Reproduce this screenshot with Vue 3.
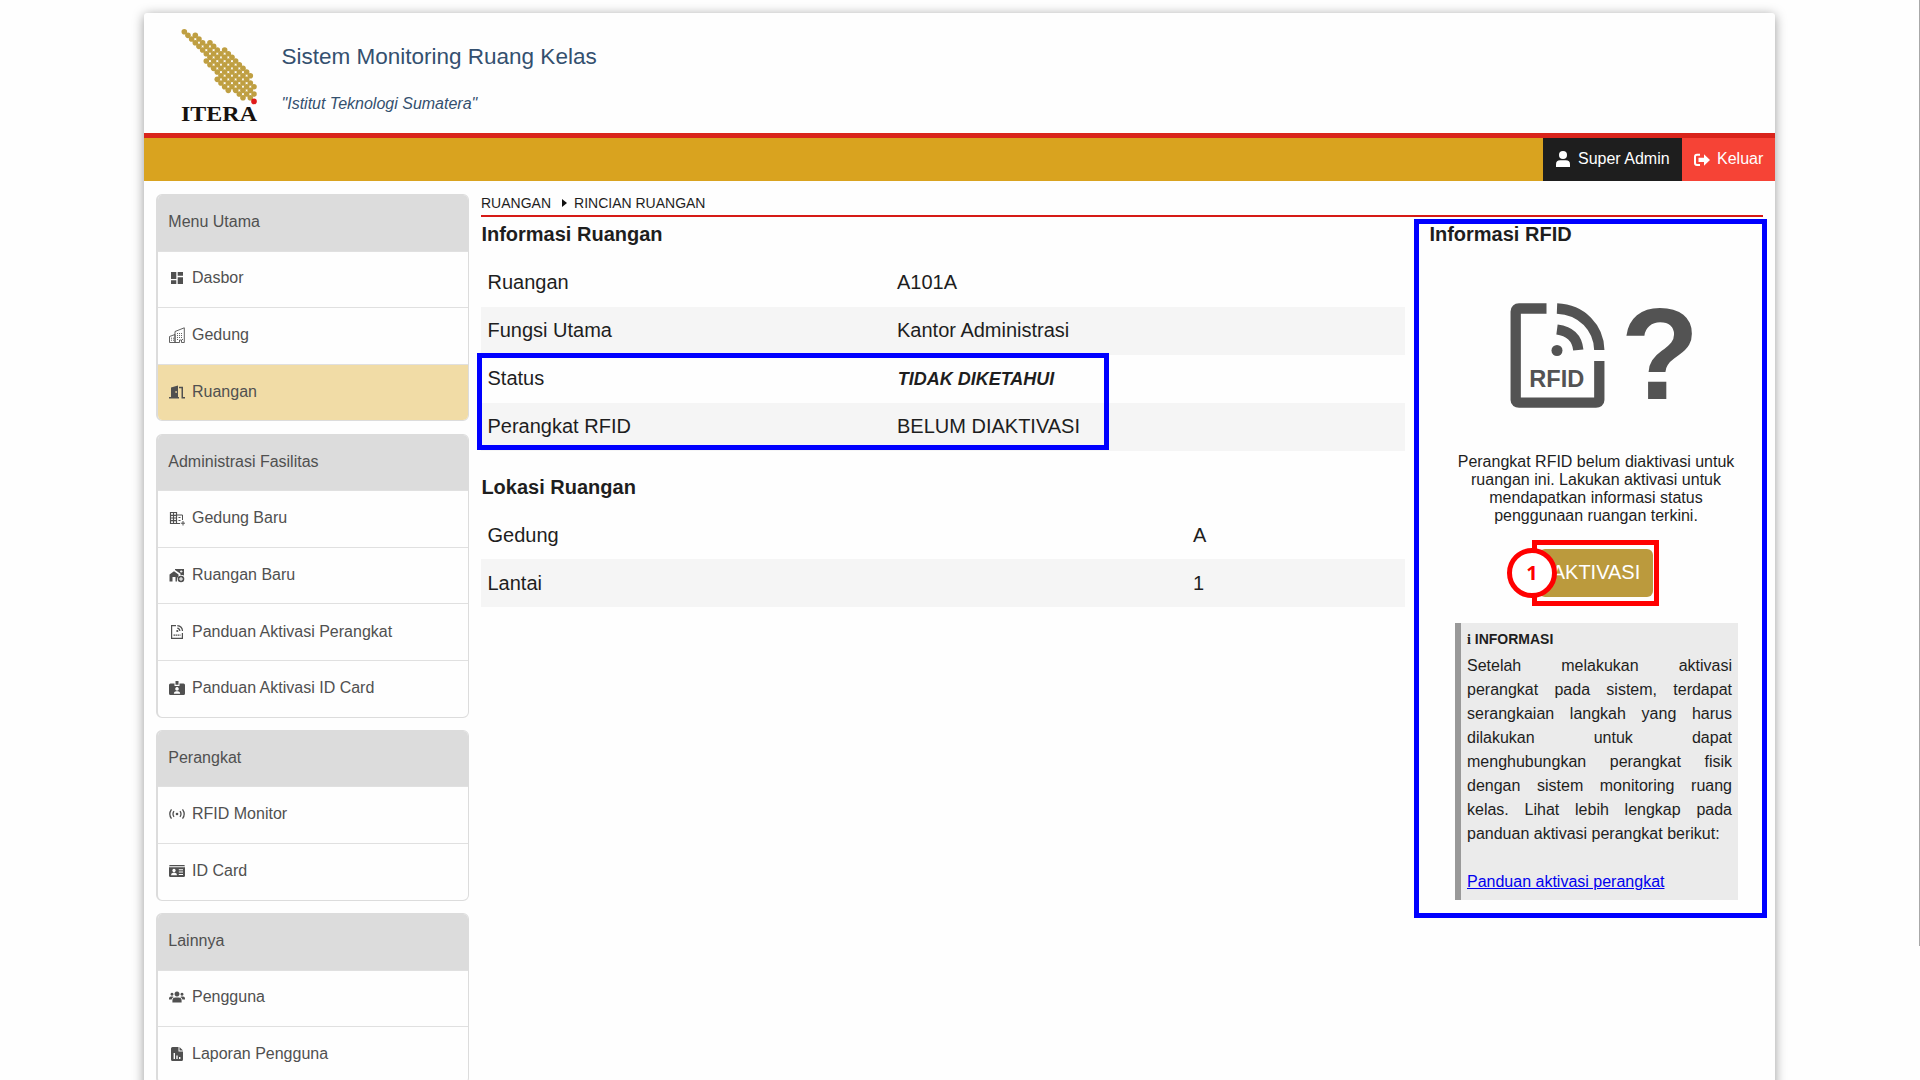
<script setup>
const menus = [
  { title: 'Menu Utama', items: [
    { label: 'Dasbor', icon: 'dash' },
    { label: 'Gedung', icon: 'city' },
    { label: 'Ruangan', icon: 'door', active: true }
  ] },
  { title: 'Administrasi Fasilitas', items: [
    { label: 'Gedung Baru', icon: 'buildingAdd' },
    { label: 'Ruangan Baru', icon: 'roomAdd' },
    { label: 'Panduan Aktivasi Perangkat', icon: 'rfid' },
    { label: 'Panduan Aktivasi ID Card', icon: 'badge' }
  ] },
  { title: 'Perangkat', items: [
    { label: 'RFID Monitor', icon: 'signal' },
    { label: 'ID Card', icon: 'card' }
  ] },
  { title: 'Lainnya', items: [
    { label: 'Pengguna', icon: 'users' },
    { label: 'Laporan Pengguna', icon: 'report' }
  ] }
]

const icons = {
  dash: 'M2 2h5.3v7H2zM8.7 2H14v3.8H8.700zM8.700 7.200H14V14H8.700zM2 10.300h5.300V14H2z',
  door: 'M2 3.500 9 1.500V13h1v1.500H0V13h2zM6.500 7v2h1.200V7zM10 2.800h4V13h2v1.500h-3.500V4.200H10z',
  badge: 'M1.500 3.500H5.500V6h5V3.500h4Q16 3.500 16 5v8.500Q16 15 14.500 15h-13Q0 15 0 13.500V5Q0 3.500 1.500 3.500zM8 7a1.800 1.800 0 1 0 .01 0zM4.800 13.800h6.400q0-2.600-2.200-2.600H7q-2.200 0-2.200 2.600zM6.500 1h3v3.800h-3z',
  card: 'M1.500 2h13Q16 2 16 3.200H0Q0 2 1.500 2zM0 4.200h16v8.600q0 1.200-1.500 1.200h-13Q0 14 0 12.800zM5 5.800a1.700 1.700 0 1 0 .01 0zM2 12.300h6q0-2.500-2-2.500H4q-2 0-2 2.500zM9.800 6.200v1H14v-1zM9.800 8.600v1H14v-1zM9.800 11v1H14v-1z',
  users: 'M8 2.500a2.500 2.500 0 1 0 .01 0zM3 3.800a1.500 1.500 0 1 0 .01 0zM13 3.800a1.500 1.500 0 1 0 .01 0zM3.400 13.500v-2q0-3 3-3h3.200q3 0 3 3v2zM0 10.500v-1q0-2 2-2h1.600q.8 0 1.200.4-2 .8-2.200 2.600zM16 10.500v-1q0-2-2-2h-1.600q-.8 0-1.200.4 2 .8 2.200 2.600z',
  report: 'M3.500 1H9.500v4.500H14V13.500Q14 15 12.500 15h-9Q2 15 2 13.500v-11Q2 1 3.500 1zM10.500 1 14 4.500h-3.500zM4.600 7v6H6V7zM7.300 9.500V13h1.400V9.500zM10 11v2h1.400v-2z'
}

const spans = [
  [0, 0], [1, 3], [2, 4], [3, 7], [4, 8], [5, 11], [6, 12], [7, 13], [6, 14], [7, 15],
  [8, 16], [9, 17], [10, 18], [9, 17], [10, 18], [11, 19], [12, 18], [15, 19], [16, 18]
]
const dots = spans.flatMap(([from, to], row) => {
  const out = []
  for (let c = from; c <= to; c += 2) out.push({ x: 3.3 + c * 3.667, y: 3.7 + row * 3.667 })
  return out
})

const room = [
  ['Ruangan', 'A101A'],
  ['Fungsi Utama', 'Kantor Administrasi'],
  ['Status', 'TIDAK DIKETAHUI'],
  ['Perangkat RFID', 'BELUM DIAKTIVASI']
]
const place = [['Gedung', 'A'], ['Lantai', '1']]
</script>

<template>
  <div class="screen">
    <div class="page">
      <header class="head">
        <svg class="logo" width="80" height="96" viewBox="0 0 80 96">
          <circle v-for="(d, i) in dots" :key="i" :cx="d.x" :cy="d.y" r="2.8" fill="#bf9f42" />
          <circle cx="73" cy="73.400" r="2.800" fill="#e01b1b" />
          <text x="0" y="92.800" textLength="76" lengthAdjust="spacingAndGlyphs" class="logo-text">ITERA</text>
        </svg>
        <div class="titles">
          <div class="title">Sistem Monitoring Ruang Kelas</div>
          <div class="subtitle">"Istitut Teknologi Sumatera"</div>
        </div>
      </header>

      <nav class="bar">
        <a class="user">
          <svg width="14" height="16" viewBox="0 0 14 16" fill="#fff"><circle cx="7" cy="4" r="4" /><path d="M0 16v-2.500Q0 9.300 4.200 9.300h5.600q4.200 0 4.200 4.200V16z" /></svg>
          <span>Super Admin</span>
        </a>
        <a class="out">
          <svg width="16" height="14" viewBox="0 0 16 14"><path d="M6 1.700H3Q1 1.700 1 3.700v6.300q0 2 2 2h3" fill="none" stroke="#fff" stroke-width="2" /><path d="M4.500 4.800H10V1.200L16 7l-6 5.800V9H4.500z" fill="#fff" /></svg>
          <span>Keluar</span>
        </a>
      </nav>

      <div class="body">
        <aside class="side">
          <section v-for="m in menus" :key="m.title" class="menu">
            <div class="menu-title">{{ m.title }}</div>
            <a v-for="it in m.items" :key="it.label" class="item" :class="{ active: it.active }">
              <svg width="16" height="16" viewBox="0 0 16 16">
                <g v-if="it.icon === 'city'" fill="none" stroke="#505050" stroke-width=".9">
                  <path d="M.5 15.500V9.500L6 7.500v8zM6 15.500V4.500L15.300.8v14.700h-2.800v-2.500h-2v2.500z" />
                  <path d="M2 11.200h3M2 13.200h3M8 6.500h6M8 8.500h6M8 10.500h6M8 12.500h2M13 12.500h1" stroke-dasharray="1 1" />
                </g>
                <g v-else-if="it.icon === 'buildingAdd'" fill="none" stroke="#505050">
                  <path d="M1.500 2.500h6v11h-6zM1.500 5.300h6M1.500 8h6M1.500 10.700h6M4.500 2.500v11" stroke-width="1.200" />
                  <path d="M7.500 5h6v5M7.500 13.500H11M9.500 7.500h2M9.500 10.500h2M14 11v4.500M11.800 13.200h4.400" />
                </g>
                <g v-else-if="it.icon === 'roomAdd'">
                  <path d="M.5 14.500V7.500L5 4.300 9.500 7.500v2q-2 1-1.500 5H6.500V10h-3v4.500zM6 2h9v6.500q-1.200-.8-3.500-.3V6.800L6 3z" fill="#505050" />
                  <path d="M11 4.500h2.500M12.200 3.200v2.500" stroke="#fff" stroke-width=".8" />
                  <circle cx="12" cy="12" r="3.300" fill="#505050" /><path d="M12 10v4M10 12h4" stroke="#fff" />
                </g>
                <g v-else-if="it.icon === 'rfid'" fill="none" stroke="#505050" stroke-width="1.200">
                  <path d="M7 1.600H2.600v12.800h10.800V9M8.300 1.600q5 .6 5.200 5.400M8.300 4.200q2.300.3 2.600 2.800" />
                  <path d="M4.500 11.200h7" stroke-dasharray="1.500 .5" /><circle cx="8.300" cy="7" r=".5" />
                </g>
                <g v-else-if="it.icon === 'signal'" fill="none" stroke="#505050" stroke-width="1.300">
                  <path d="M2.500 3.300q-3.400 4.700 0 9.400M13.500 3.300q3.400 4.700 0 9.400M5 5.200q-2 2.800 0 5.600M11 5.200q2 2.800 0 5.600" />
                  <circle cx="8" cy="8" r="1.300" fill="#505050" stroke="none" />
                </g>
                <path v-else :d="icons[it.icon]" fill="#505050" fill-rule="evenodd" />
              </svg>
              <span>{{ it.label }}</span>
            </a>
          </section>
        </aside>

        <main class="main">
          <div class="crumb">
            <span>RUANGAN</span>
            <svg width="5" height="8" viewBox="0 0 5 8"><path d="M0 0 5 4 0 8z" fill="#111" /></svg>
            <span>RINCIAN RUANGAN</span>
          </div>
          <div class="cols">
            <div class="info">
              <h2>Informasi Ruangan</h2>
              <div class="table">
                <div v-for="r in room" :key="r[0]" class="row">
                  <span class="key">{{ r[0] }}</span>
                  <span :class="{ unknown: r[0] === 'Status' }">{{ r[1] }}</span>
                </div>
                <div class="frame status-frame"></div>
              </div>
              <h2 class="second">Lokasi Ruangan</h2>
              <div class="table place">
                <div v-for="r in place" :key="r[0]" class="row low">
                  <span class="key wide">{{ r[0] }}</span><span>{{ r[1] }}</span>
                </div>
              </div>
            </div>

            <div class="rfid">
              <h2>Informasi RFID</h2>
              <svg class="rfid-icon" width="184" height="108" viewBox="0 0 184 108">
                <g fill="none" stroke="#535353" stroke-width="10.300">
                  <path d="M36.500 7.500H9Q5.700 7.500 5.700 10.500V99Q5.700 101.600 9 101.600H86Q89.300 101.600 89.300 99V60" />
                  <path d="M47 7.500C72 8.500 88.800 27 89.300 49M47 28.500Q66.500 31 68.300 49" />
                </g>
                <circle cx="47" cy="49.500" r="5.500" fill="#535353" />
                <text x="19.300" y="86" class="rfid-label" textLength="55" lengthAdjust="spacingAndGlyphs">RFID</text>
                <text x="110.500" y="98" class="question">?</text>
              </svg>
              <p class="note">Perangkat RFID belum diaktivasi untuk<br>ruangan ini. Lakukan aktivasi untuk<br>mendapatkan informasi status<br>penggunaan ruangan terkini.</p>
              <div class="action">
                <button type="button">AKTIVASI</button>
                <div class="red-frame"></div>
                <div class="step">1</div>
              </div>
              <div class="tip">
                <div class="tip-title"><span class="i">i</span> INFORMASI</div>
                <p>Setelah melakukan aktivasi perangkat pada sistem, terdapat serangkaian langkah yang harus dilakukan untuk dapat menghubungkan perangkat fisik dengan sistem monitoring ruang kelas. Lihat lebih lengkap pada panduan aktivasi perangkat berikut:</p>
                <a class="link">Panduan aktivasi perangkat</a>
              </div>
              <div class="frame rfid-frame"></div>
            </div>
          </div>
        </main>
      </div>
    </div>
    <div class="scroll"></div>
  </div>
</template>

<style>
html, body { margin: 0; overflow: hidden; background: #fff; }
</style>

<style scoped>
* { box-sizing: border-box; }
.screen { position: relative; width: 1920px; height: 1080px; overflow: hidden; background: #fefefe; font-family: "Liberation Sans", Arial, sans-serif; font-size: 16px; color: #1e1e1e; }
.page { width: 1631px; height: 1200px; margin: 13px 0 0 144px; background: #fefefe; border-radius: 3px; box-shadow: 0 2px 12px rgba(0, 0, 0, .4); }
.head { height: 125px; display: flex; border-bottom: 5px solid #d9241b; }
.logo { margin: 15px 0 0 37px; }
.logo-text { font: bold 20.500px "Liberation Serif", serif; fill: #17120f; }
.titles { margin-left: 20.500px; color: #34506f; }
.title { margin-top: 31px; font-size: 22.500px; line-height: 26px; }
.subtitle { margin-top: 25px; font-size: 16px; line-height: 18px; font-style: italic; }
.bar { height: 43px; background: #d9a31f; display: flex; justify-content: flex-end; color: #fff; }
.bar a { display: flex; align-items: center; padding-bottom: 2px; }
.user { width: 139px; background: #1e1e1e; padding-left: 13px; gap: 8px; }
.out { width: 93px; background: #f64336; padding-left: 12px; gap: 7px; }
.user svg { position: relative; top: .5px; }
.out svg { position: relative; top: 1px; }
.body { display: flex; padding: 13px 12px 0 12px; }
.side { width: 313px; display: flex; flex-direction: column; gap: 12.400px; margin-right: 12px; flex: none; color: #505050; }
.menu { border: 1px solid #dcdcdc; border-left-width: 2px; border-radius: 6px; overflow: hidden; }
.menu-title { height: 55.500px; line-height: 53px; padding-left: 10.300px; background: #dcdcdc; }
.item { height: 56.600px; display: flex; align-items: center; gap: 6.700px; padding: 0 0 1px 11.300px; border-top: 1px solid #e0e0e0; }
.item:nth-child(2) { padding-bottom: 2px; }
.item svg { flex: none; }
.item.active { background: #f1dca6; }
.main { flex: 1; min-width: 0; }
.crumb { height: 23px; display: flex; align-items: center; gap: 8px; padding-bottom: 3px; font-size: 14px; border-bottom: 2px solid #d61a16; }
.crumb svg { margin-left: 3px; margin-right: -1px; }
.cols { display: flex; justify-content: space-between; }
.info { width: 924px; }
h2 { margin: 0; font-size: 20px; line-height: 24px; padding: 5px 0 0 .4px; }
.table { position: relative; margin-top: 13px; font-size: 20px; }
.second { padding-top: 24px; }
.place { margin-top: 12px; }
.row { height: 48px; display: flex; align-items: center; padding: 0 0 1px 6.500px; }
.row.low { padding-top: 1px; padding-bottom: 0; }
.row:nth-child(even) { background: #f5f5f5; }
.key { width: 409.500px; }
.key.wide { width: 705.500px; }
.unknown { font-weight: bold; font-style: italic; font-size: 18px; padding: 1px 0 0 .7px; }
.frame { position: absolute; border: 5px solid #00f; }
.status-frame { left: -4px; top: 94px; width: 632px; height: 97px; }
.rfid { position: relative; width: 334px; display: flex; flex-direction: column; align-items: flex-start; }
.rfid-frame { left: -15px; top: 2px; width: 353px; height: 699px; }
.rfid-icon { margin: 55px 0 0 81px; overflow: visible; }
.rfid-label { font: bold 23.500px "Liberation Sans", Arial, sans-serif; fill: #535353; }
.question { font: bold 129px "Liberation Sans", Arial, sans-serif; fill: #535353; }
.note { width: 334px; margin: 43.500px 0 0; text-align: center; line-height: 18px; }
.action { position: relative; margin: 24.500px 0 0 110px; }
button { display: block; width: 114px; height: 48px; border: 0; border-radius: 6px; background: #bb9a3d; color: #fff; font: 20px "Liberation Sans", Arial, sans-serif; padding: 0 0 2px; }
.red-frame { position: absolute; left: -7px; top: -9px; width: 127px; height: 66px; border: 5px solid #f00; }
.step { position: absolute; left: -32px; top: -1px; width: 50px; height: 50px; border: 5px solid #f00; border-radius: 50%; background: #fff; color: #f00; font: bold 20px/39px "Noto Sans", sans-serif; text-align: center; }
.tip { width: 283px; height: 277px; margin: 26px 0 0 26px; border-left: 6px solid #999; background: #ebebeb; padding: 6px 6px 0; line-height: 24px; }
.tip-title { font-weight: bold; font-size: 14px; line-height: 20px; padding-bottom: 4px; }
.i { font-family: "Liberation Serif", serif; }
.tip p { margin: 0 0 24px; text-align: justify; }
.link { color: #00e; text-decoration: underline; }
.scroll { position: absolute; right: 0; top: 0; width: 1px; height: 946px; background: #a8a8a8; }
</style>
